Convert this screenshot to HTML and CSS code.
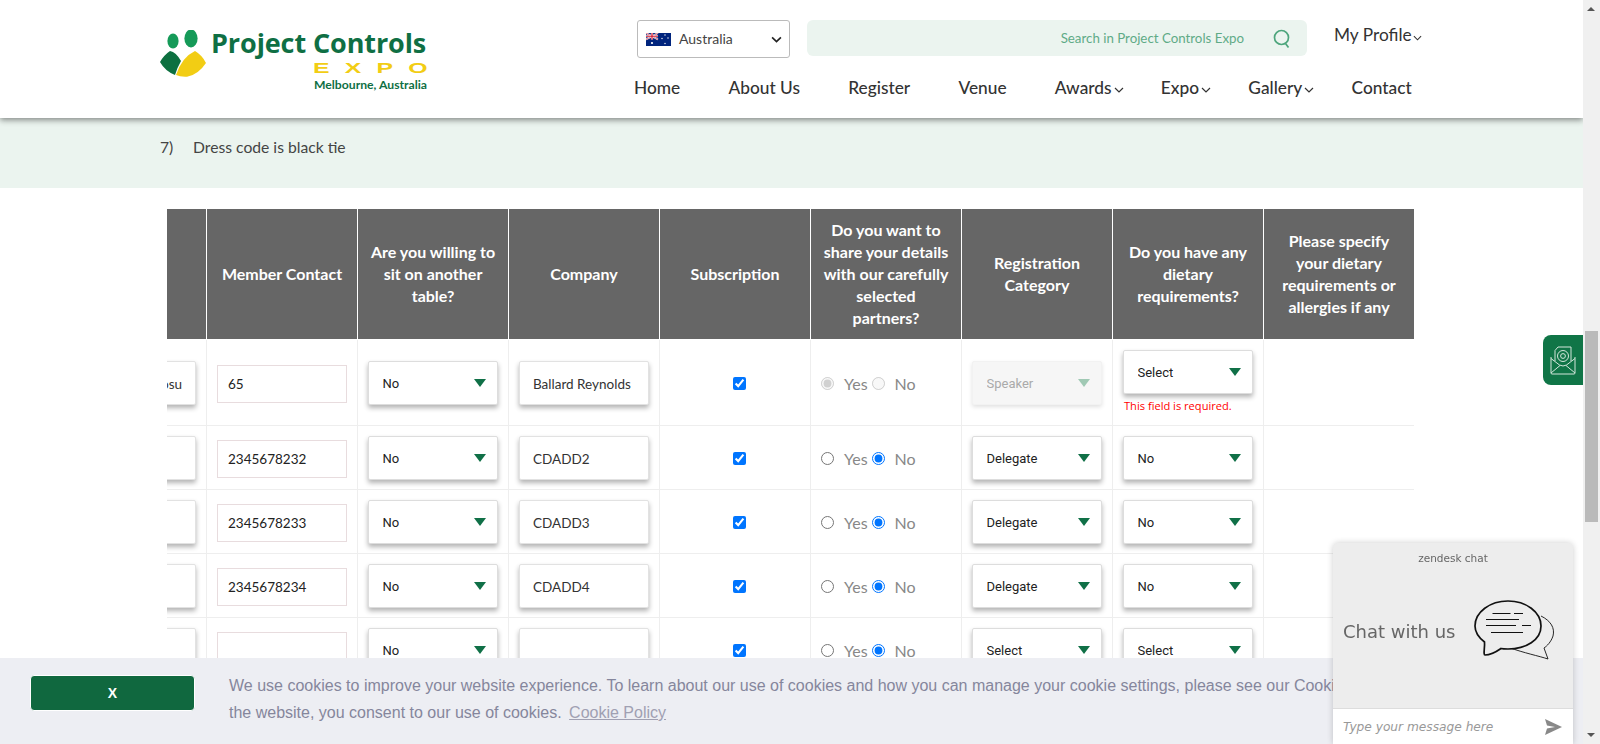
FILE: index.html
```html
<!DOCTYPE html>
<html lang="en">
<head>
  <meta charset="UTF-8">
  <meta name="viewport" content="width=device-width, initial-scale=1.0">
  <title>Project Controls Expo - Register</title>
  <link rel="stylesheet" href="styles.css">
</head>
<body>
  <div class="page">
    <header class="site-header">
      <a class="logo" href="#">
        <svg class="logo-mark" viewBox="0 0 46 47" width="46" height="47">
          <ellipse cx="13" cy="11" rx="5.6" ry="7.4" fill="#159a58"/>
          <ellipse cx="31" cy="8.5" rx="6.6" ry="9" fill="#159a58"/>
          <path d="M0 32Q4 25 10 21Q16 22 21 31Q17 38 15 45Q5 41 0 32Z" fill="#0d7040"/>
          <path d="M16 45Q22 27 35 21Q42 25 46 33Q38 45 27 46.7Q20 47 16 45Z" fill="#f2cd14"/>
        </svg>
        <div class="logo-text">
          <div class="logo-name">Project Controls</div>
          <div class="logo-expo">EXPO</div>
          <div class="logo-place">Melbourne, Australia</div>
        </div>
      </a>
      <div class="header-right">
        <div class="top-row">
          <div class="country">
            <svg class="flag" viewBox="0 0 25 13" width="25" height="13">
              <rect width="25" height="13" fill="#00247d"/>
              <path d="M0 0L12 6.5M12 0L0 6.5" stroke="#fff" stroke-width="1.6"/>
              <path d="M0 0L12 6.5M12 0L0 6.5" stroke="#cf142b" stroke-width=".6"/>
              <path d="M6 0V6.5M0 3.25H12" stroke="#fff" stroke-width="2.2"/>
              <path d="M6 0V6.5M0 3.25H12" stroke="#cf142b" stroke-width="1.2"/>
              <circle cx="6" cy="10" r="1.1" fill="#fff"/>
              <circle cx="19" cy="2" r=".7" fill="#fff"/>
              <circle cx="16" cy="5.5" r=".7" fill="#fff"/>
              <circle cx="22" cy="5" r=".7" fill="#fff"/>
              <circle cx="19" cy="10.5" r=".7" fill="#fff"/>
            </svg>
            <span class="country-name">Australia</span>
            <svg class="caret" viewBox="0 0 10 6" width="11" height="7"><path d="M1 1L5 5L9 1" fill="none" stroke="#222" stroke-width="1.5"/></svg>
          </div>
          <div class="search">
            <span class="search-text">Search in Project Controls Expo</span>
            <svg class="search-icon" viewBox="0 0 18 20" width="18" height="20">
              <circle cx="8.5" cy="8.5" r="7" fill="none" stroke="#4da57c" stroke-width="1.7"/>
              <path d="M12.5 14.5L15.5 18.5" stroke="#4da57c" stroke-width="1.7"/>
            </svg>
          </div>
          <a class="profile" href="#">My Profile<svg class="caret" viewBox="0 0 10 6" width="9" height="6"><path d="M1 1L5 5L9 1" fill="none" stroke="#333" stroke-width="1.2"/></svg></a>
        </div>
        <nav class="main-nav">
          <a href="#">Home</a>
          <a href="#">About Us</a>
          <a href="#">Register</a>
          <a href="#">Venue</a>
          <a class="has-caret" href="#">Awards<svg class="caret" viewBox="0 0 10 6" width="10" height="6"><path d="M1 1L5 5L9 1" fill="none" stroke="#333" stroke-width="1.2"/></svg></a>
          <a class="has-caret" href="#">Expo<svg class="caret" viewBox="0 0 10 6" width="10" height="6"><path d="M1 1L5 5L9 1" fill="none" stroke="#333" stroke-width="1.2"/></svg></a>
          <a class="has-caret" href="#">Gallery<svg class="caret" viewBox="0 0 10 6" width="10" height="6"><path d="M1 1L5 5L9 1" fill="none" stroke="#333" stroke-width="1.2"/></svg></a>
          <a href="#">Contact</a>
        </nav>
      </div>
    </header>

    <section class="notes">
      <span class="note-num">7)</span>
      <span>Dress code is black tie</span>
    </section>

    <div class="table-wrap">
      <table class="reg-table">
        <colgroup>
          <col><col><col><col><col><col><col><col><col>
        </colgroup>
        <thead>
          <tr>
            <th></th>
            <th>Member Contact</th>
            <th>Are you willing to sit on another table?</th>
            <th>Company</th>
            <th>Subscription</th>
            <th>Do you want to share your details with our carefully selected partners?</th>
            <th>Registration Category</th>
            <th>Do you have any dietary requirements?</th>
            <th>Please specify your dietary requirements or allergies if any</th>
          </tr>
        </thead>
        <tbody>
          <tr class="first-row">
            <td><input class="field raised end" type="text" value="Oposu"></td>
            <td><input class="field" type="text" value="65"></td>
            <td><div class="sel"><select><option>No</option></select></div></td>
            <td><input class="field raised" type="text" value="Ballard Reynolds"></td>
            <td class="center"><input type="checkbox" checked></td>
            <td><div class="yes-no"><input type="radio" name="p1" checked disabled><span class="yes">Yes</span><input type="radio" name="p1" disabled><span class="no">No</span></div></td>
            <td><div class="sel off"><select disabled><option>Speaker</option></select></div></td>
            <td><div class="sel"><select><option>Select</option></select></div><div class="error">This field is required.</div></td>
            <td></td>
          </tr>
          <tr>
            <td><input class="field raised" type="text"></td>
            <td><input class="field" type="text" value="2345678232"></td>
            <td><div class="sel"><select><option>No</option></select></div></td>
            <td><input class="field raised" type="text" value="CDADD2"></td>
            <td class="center"><input type="checkbox" checked></td>
            <td><div class="yes-no"><input type="radio" name="p2"><span class="yes">Yes</span><input type="radio" name="p2" checked><span class="no">No</span></div></td>
            <td><div class="sel"><select><option>Delegate</option></select></div></td>
            <td><div class="sel"><select><option>No</option></select></div></td>
            <td></td>
          </tr>
          <tr>
            <td><input class="field raised" type="text"></td>
            <td><input class="field" type="text" value="2345678233"></td>
            <td><div class="sel"><select><option>No</option></select></div></td>
            <td><input class="field raised" type="text" value="CDADD3"></td>
            <td class="center"><input type="checkbox" checked></td>
            <td><div class="yes-no"><input type="radio" name="p3"><span class="yes">Yes</span><input type="radio" name="p3" checked><span class="no">No</span></div></td>
            <td><div class="sel"><select><option>Delegate</option></select></div></td>
            <td><div class="sel"><select><option>No</option></select></div></td>
            <td></td>
          </tr>
          <tr>
            <td><input class="field raised" type="text"></td>
            <td><input class="field" type="text" value="2345678234"></td>
            <td><div class="sel"><select><option>No</option></select></div></td>
            <td><input class="field raised" type="text" value="CDADD4"></td>
            <td class="center"><input type="checkbox" checked></td>
            <td><div class="yes-no"><input type="radio" name="p4"><span class="yes">Yes</span><input type="radio" name="p4" checked><span class="no">No</span></div></td>
            <td><div class="sel"><select><option>Delegate</option></select></div></td>
            <td><div class="sel"><select><option>No</option></select></div></td>
            <td></td>
          </tr>
          <tr>
            <td><input class="field raised" type="text"></td>
            <td><input class="field" type="text"></td>
            <td><div class="sel"><select><option>No</option></select></div></td>
            <td><input class="field raised" type="text"></td>
            <td class="center"><input type="checkbox" checked></td>
            <td><div class="yes-no"><input type="radio" name="p5"><span class="yes">Yes</span><input type="radio" name="p5" checked><span class="no">No</span></div></td>
            <td><div class="sel"><select><option>Select</option></select></div></td>
            <td><div class="sel"><select><option>Select</option></select></div></td>
            <td></td>
          </tr>
        </tbody>
      </table>
    </div>
  </div>

  <a class="mail-tab" href="#">
    <svg viewBox="0 0 26 29" width="26" height="29" fill="none" stroke="#d3e6db" stroke-width="1">
      <path d="M1 11V27Q1 28 2 28H24Q25 28 25 27V11"/>
      <path d="M1 27L10 19.5M25 27L16 19.5"/>
      <path d="M1 12.5L9.5 19Q13 21 16.5 19L25 12.5"/>
      <path d="M5 15V4.5L8 1H21V15"/>
      <circle cx="13" cy="10" r="5.5"/>
      <circle cx="13" cy="10" r="2.4"/>
    </svg>
  </a>

  <div class="cookie-bar">
    <button class="cookie-close" type="button">X</button>
    <p class="cookie-text">We use cookies to improve your website experience. To learn about our use of cookies and how you can manage your cookie settings, please see our Cookie Policy. By continuing to use the website, you consent to our use of cookies. <a href="#">Cookie Policy</a></p>
  </div>

  <aside class="chat">
    <div class="chat-brand">zendesk chat</div>
    <div class="chat-body">
      <span class="chat-title">Chat with us</span>
      <svg class="chat-bubbles" viewBox="0 0 90 70" width="90" height="70" fill="none" stroke="#111">
        <path d="M72 22C82 27 86 34 84 42C82 48 78 52 75 54L79 65C70 62 55 59 40 53.5" stroke-width=".9"/>
        <path d="M15.5 48C9 43 6 38 6 32C6 18 21 7 39 7C57 7 72 18 72 32C72 46 57 55 39 55C36 55 34 55 32 54.5C27 58 22 61 16 61C14 61 16 53 15.5 48Z" fill="#ededed" stroke-width="1.7"/>
        <path d="M23.5 19.5H41.5M45 19.5H54M17 25.5H50M17 31.5H47M53 31.5H62M22 38.5H54" stroke-width="1"/>
      </svg>
    </div>
    <div class="chat-input">
      <span class="chat-placeholder">Type your message here</span>
      <svg viewBox="0 0 17 16" width="17" height="16"><path d="M0 0L17 8L0 16L2 9.5L10 8L2 6.5Z" fill="#888"/></svg>
    </div>
  </aside>

  <div class="scrollbar">
    <span class="arrow-up"></span>
    <span class="thumb"></span>
    <span class="arrow-down"></span>
  </div>
</body>
</html>
```

FILE: styles.css
```css
body {
  margin: 0;
  height: 744px;
  overflow: hidden;
  background-color: #fff;
  color: #444;
  font-family: 'Lato', sans-serif;
}
a {
  color: inherit;
  text-decoration: none;
}
.page {
  width: 1583px;
}

/* header */
.site-header {
  display: flex;
  position: relative;
  z-index: 2;
  height: 118px;
  box-sizing: border-box;
  padding: 20px 0 0 160px;
  background-color: #fff;
  box-shadow: 0 2px 6px rgba(0, 0, 0, 0.45);
}
.logo {
  display: flex;
  width: 477px;
  align-items: flex-start;
}
.logo-mark {
  margin-top: 10px;
  flex: none;
}
.logo-text {
  margin-left: 5px;
  width: 225px;
}
.logo-name {
  margin-top: 7px;
  font-family: 'Open Sans', sans-serif;
  font-size: 27px;
  line-height: 32px;
  font-weight: 700;
  color: #0f6f44;
  letter-spacing: -0.1px;
  white-space: nowrap;
}
.logo-expo {
  margin: 2px 0 0 102px;
  font-family: 'Liberation Sans', sans-serif;
  font-size: 15.5px;
  line-height: 14px;
  font-weight: 700;
  color: #f2cd14;
  letter-spacing: 9.5px;
  transform: scaleX(1.6);
  transform-origin: left center;
  white-space: nowrap;
}
.logo-place {
  margin: 2px 0 0 103px;
  font-size: 12.2px;
  line-height: 15px;
  font-weight: 700;
  color: #0f6f44;
  white-space: nowrap;
}
.top-row {
  display: flex;
  align-items: flex-start;
}
.country {
  display: flex;
  align-items: center;
  width: 153px;
  height: 38px;
  box-sizing: border-box;
  padding: 0 8px;
  border: 1px solid #bbb;
  border-radius: 3px;
}
.country-name {
  margin: 0 0 2px 8px;
  font-size: 14px;
  color: #444;
}
.country .caret {
  margin-left: auto;
  margin-right: -1px;
}
.search {
  display: flex;
  align-items: center;
  justify-content: flex-end;
  width: 500px;
  height: 36px;
  box-sizing: border-box;
  margin-left: 17px;
  padding-right: 16px;
  background-color: #ebf4ef;
  border-radius: 6px;
}
.search-text {
  font-size: 13.3px;
  color: #5fab87;
}
.search-icon {
  margin: 2px 0 0 29px;
}
.profile {
  margin: 4px 0 0 27px;
  font-size: 17.3px;
  line-height: 22px;
  color: #333;
  white-space: nowrap;
}
.profile .caret {
  margin-left: 1px;
}
.main-nav {
  display: flex;
  gap: 48.3px;
  margin: 20px 0 0 -3px;
  font-size: 17.3px;
  line-height: 20px;
  font-weight: 500;
  color: #333;
}
.main-nav .has-caret {
  margin-right: -11px;
}
.main-nav .caret {
  margin: 0 0 1px 2px;
}

/* band above the table */
.notes {
  display: flex;
  height: 70px;
  box-sizing: border-box;
  padding: 19px 0 0 160px;
  background-color: #ebf4ef;
  font-size: 15.7px;
  line-height: 20px;
  color: #444;
}
.note-num {
  width: 33px;
}

/* registration table */
.table-wrap {
  width: 1247px;
  margin: 20px 0 0 167px;
  overflow: hidden;
}
.reg-table {
  width: 1359px;
  margin-left: -112px;
  border-collapse: collapse;
  table-layout: fixed;
}
.reg-table col {
  width: 151px;
}
.reg-table th {
  height: 131px;
  box-sizing: border-box;
  padding: 10px 11px;
  background-color: #666;
  border: 1px solid #fff;
  font-size: 16px;
  line-height: 22px;
  font-weight: 700;
  color: #fff;
  text-align: center;
}
.reg-table td {
  padding: 10px 10px 9px;
  border: 1px solid #eee;
  vertical-align: middle;
}
.reg-table td.center {
  padding-left: 18px;
  text-align: center;
}
.field {
  display: block;
  width: 130px;
  height: 38px;
  box-sizing: border-box;
  margin: 1px 0 0;
  padding: 0 10px;
  background-color: #fff;
  border: 1px solid #e8dcde;
  border-radius: 0;
  outline: none;
  font-family: 'Lato', sans-serif;
  font-size: 13.5px;
  color: #222;
}
.field.raised {
  height: 44px;
  margin: 0;
  padding: 2px 13px 0;
  border: 1px solid #e2e2e2;
  border-radius: 2px;
  box-shadow: 0 3px 5px rgba(0, 0, 0, 0.3);
  font-size: 13.5px;
  color: #333;
}
.field.end {
  text-align: right;
}
.sel {
  position: relative;
  width: 130px;
  height: 44px;
  box-sizing: border-box;
  border: 1px solid #ddd;
  border-radius: 2px;
  background-color: #fff;
  box-shadow: 0 3px 5px rgba(0, 0, 0, 0.3);
}
.sel select {
  display: block;
  width: 100%;
  height: 100%;
  padding: 0 13.5px;
  border: none;
  background: none;
  outline: none;
  appearance: none;
  font-family: 'Roboto', sans-serif;
  font-size: 13px;
  color: #222;
}
.sel::after {
  content: "";
  position: absolute;
  top: 17px;
  right: 11px;
  border-left: 6px solid transparent;
  border-right: 6px solid transparent;
  border-top: 8px solid #107047;
}
.sel.off {
  border-color: #f2f2f2;
  background-color: #f6f6f6;
  box-shadow: 0 2px 4px rgba(0, 0, 0, 0.12);
}
.sel.off select {
  color: #aaa;
  opacity: 1;
}
.sel.off::after {
  border-top-color: #a0c9b4;
}
.error {
  margin: 4px 0 0 1px;
  padding-bottom: 2px;
  font-family: 'Open Sans', sans-serif;
  font-size: 11.1px;
  line-height: 16px;
  color: #f00;
  white-space: nowrap;
}
.yes-no {
  display: flex;
  align-items: center;
  font-size: 16px;
  color: #888;
}
.yes-no input {
  flex: none;
  width: 13px;
  height: 13px;
  margin: 0;
}
.yes {
  margin: 1px 4px 0 10px;
}
.no {
  margin: 1px 0 0 10px;
}

/* things that float over the page */
.mail-tab {
  position: fixed;
  top: 335px;
  left: 1543px;
  display: flex;
  align-items: center;
  justify-content: center;
  width: 40px;
  height: 50px;
  background-color: #107547;
  border-radius: 8px 0 0 8px;
}
.cookie-bar {
  position: fixed;
  left: 0;
  top: 658px;
  z-index: 3;
  display: flex;
  width: 1583px;
  height: 86px;
  box-sizing: border-box;
  padding: 17px 0 0 30px;
  background-color: #edeef3;
}
.cookie-close {
  flex: none;
  width: 165px;
  height: 36px;
  background-color: #10683f;
  border: 1px solid #fff;
  border-radius: 4px;
  font-family: 'Liberation Sans', sans-serif;
  font-size: 14px;
  font-weight: 700;
  color: #fff;
}
.cookie-text {
  width: 1325px;
  margin: -3px 0 0 34px;
  font-family: 'Liberation Sans', sans-serif;
  font-size: 16px;
  line-height: 27px;
  color: #85869c;
}
.cookie-text a {
  margin-left: 3px;
  text-decoration: underline;
  color: #a0a0b2;
}
.chat {
  position: fixed;
  left: 1333px;
  top: 543px;
  z-index: 4;
  display: flex;
  flex-direction: column;
  width: 240px;
  height: 201px;
  background-color: #ededed;
  border-radius: 5px 5px 0 0;
  box-shadow: 0 0 6px rgba(0, 0, 0, 0.2);
}
.chat-brand {
  margin-top: 8px;
  font-family: 'DejaVu Sans', sans-serif;
  font-size: 10.5px;
  line-height: 14px;
  text-align: center;
  color: #666;
}
.chat-body {
  display: flex;
  flex: 1;
  align-items: center;
  padding: 0 0 10px 10px;
}
.chat-title {
  font-family: 'DejaVu Sans', sans-serif;
  font-size: 18px;
  color: #666;
}
.chat-bubbles {
  margin: 0 0 5px 14px;
}
.chat-input {
  display: flex;
  align-items: center;
  justify-content: space-between;
  height: 36px;
  box-sizing: border-box;
  padding: 0 11px 0 10px;
  background-color: #fff;
  border-top: 1px solid #ddd;
}
.chat-placeholder {
  font-family: 'DejaVu Sans', sans-serif;
  font-size: 12.2px;
  font-style: italic;
  color: #999;
}
.scrollbar {
  position: fixed;
  top: 0;
  right: 0;
  z-index: 5;
  width: 17px;
  height: 744px;
  background-color: #f0f0f0;
}
.thumb {
  position: absolute;
  top: 331px;
  left: 2px;
  width: 13px;
  height: 191px;
  background-color: #bababa;
}
.arrow-up,
.arrow-down {
  position: absolute;
  left: 4px;
  border-left: 4.5px solid transparent;
  border-right: 4.5px solid transparent;
}
.arrow-up {
  top: 7px;
  border-bottom: 4px solid #555;
}
.arrow-down {
  top: 733px;
  border-top: 4px solid #555;
}
```
